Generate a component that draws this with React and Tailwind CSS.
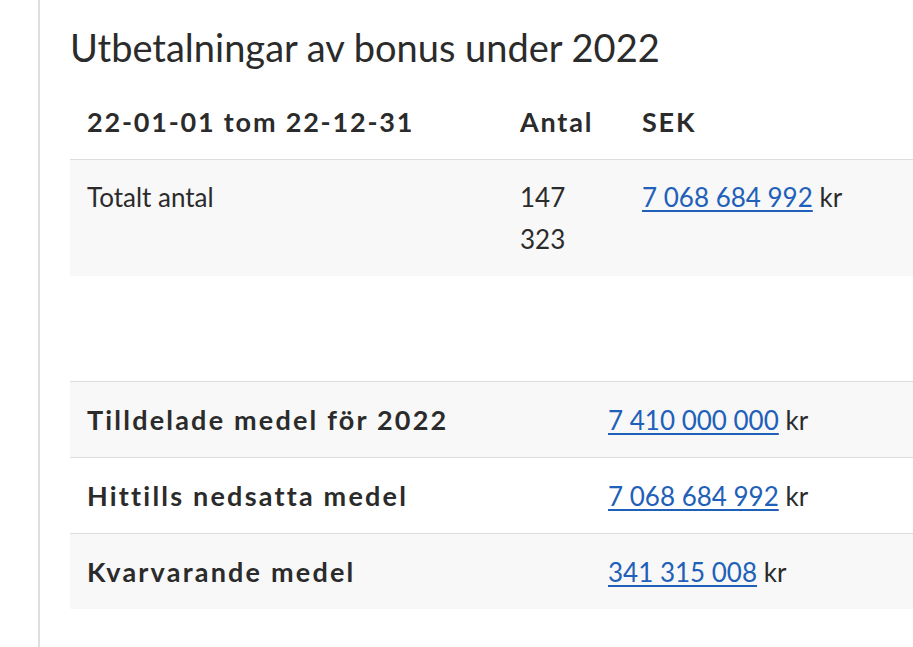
const ROWS = [
  { label: "Tilldelade medel för 2022", amount: "7 410 000 000", shaded: true },
  { label: "Hittills nedsatta medel", amount: "7 068 684 992", shaded: false },
  { label: "Kvarvarande medel", amount: "341 315 008", shaded: true },
];

function Amount({ value }) {
  return (
    <span>
      <a href="#" className="text-[#2160b8] underline underline-offset-[3px] decoration-[1.5px]">
        {value}
      </a>{" "}
      kr
    </span>
  );
}

export default function App() {
  return (
    <div
      className="min-h-screen h-[647px] bg-white overflow-hidden flex text-[#2b2b2b]"
      style={{ fontFamily: "Lato, 'Open Sans', sans-serif" }}
    >
      {/* left rule */}
      <div className="w-[38px] shrink-0" />
      <div className="w-[2px] shrink-0 bg-[#dedede]" />

      <div className="flex-1 pl-[30px] pt-[24px]">
        <h2 className="text-[38px] leading-[46px] font-normal text-[#2b2b2b]">
          Utbetalningar av bonus under 2022
        </h2>

        {/* period table */}
        <div className="mt-[15px] w-[900px] text-[26px] leading-[42px]">
          <div className="grid grid-cols-[433px_122px_1fr] border-b border-[#dddddd] font-bold text-[27px] tracking-[1.8px]">
            <div className="px-[17px] py-[16px]">22-01-01 tom 22-12-31</div>
            <div className="px-[17px] py-[16px]">Antal</div>
            <div className="px-[17px] py-[16px]">SEK</div>
          </div>
          <div className="grid grid-cols-[433px_122px_1fr] bg-[#f8f8f8]">
            <div className="px-[17px] py-[16px]">Totalt antal</div>
            <div className="px-[17px] py-[16px]">
              147
              <br />
              323
            </div>
            <div className="px-[17px] py-[16px]">
              <Amount value="7 068 684 992" />
            </div>
          </div>
        </div>

        {/* funds table */}
        <div className="mt-[105px] w-[900px] text-[26px] leading-[42px] border-t border-[#dddddd]">
          {ROWS.map((row, i) => (
            <div
              key={row.label}
              className={
                "grid grid-cols-[522px_1fr] " +
                (row.shaded ? "bg-[#f8f8f8] " : "bg-white ") +
                (i < ROWS.length - 1 ? "border-b border-[#dddddd]" : "")
              }
            >
              <div className="px-[17px] pt-[17px] pb-[16px] font-bold text-[27px] tracking-[2.2px]">{row.label}</div>
              <div className="px-[16px] pt-[17px] pb-[16px]">
                <Amount value={row.amount} />
              </div>
            </div>
          ))}
        </div>
      </div>
    </div>
  );
}
